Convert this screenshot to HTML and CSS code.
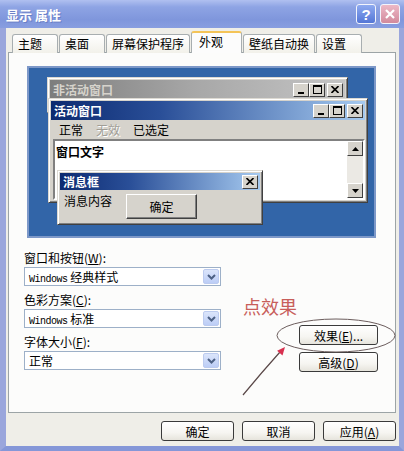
FILE: index.html
```html
<!DOCTYPE html>
<html lang="zh-CN">
<head>
    <meta charset="UTF-8">
    <meta name="viewport" content="width=device-width, initial-scale=1.0">
    <title>显示 属性</title>
    <link rel="stylesheet" href="styles.css">
</head>
<body>
    <div class="window">
        <div class="titlebar">
            <span class="title">显示 属性</span>
            <div class="caption-btns">
                <span class="cap-btn help">?</span>
                <span class="cap-btn close">
                    <svg width="10" height="10" viewBox="0 0 10 10"><path d="M1 1 L9 9 M9 1 L1 9" stroke="#fff" stroke-width="2.2"/></svg>
                </span>
            </div>
        </div>

        <div class="client">
            <div class="tabs">
                <div class="tab">主题</div>
                <div class="tab">桌面</div>
                <div class="tab">屏幕保护程序</div>
                <div class="tab selected">外观</div>
                <div class="tab">壁纸自动换</div>
                <div class="tab">设置</div>
            </div>

            <div class="panel">
                <!-- Preview of window appearance -->
                <div class="preview">
                    <div class="mini-win inactive">
                        <div class="mini-title">
                            <span>非活动窗口</span>
                            <div class="mini-btns">
                                <span class="mini-btn"><svg width="8" height="8"><rect x="1" y="6" width="6" height="2" fill="#000"/></svg></span>
                                <span class="mini-btn"><svg width="9" height="9"><rect x="0.5" y="0.5" width="8" height="8" fill="none" stroke="#000"/><rect x="0" y="0" width="9" height="2" fill="#000"/></svg></span>
                                <span class="mini-btn gap"><svg width="8" height="7"><path d="M0.5 0 L7.5 7 M7.5 0 L0.5 7" stroke="#000" stroke-width="1.6"/></svg></span>
                            </div>
                        </div>
                    </div>

                    <div class="mini-win active">
                        <div class="mini-title">
                            <span>活动窗口</span>
                            <div class="mini-btns">
                                <span class="mini-btn"><svg width="8" height="8"><rect x="1" y="6" width="6" height="2" fill="#000"/></svg></span>
                                <span class="mini-btn"><svg width="9" height="9"><rect x="0.5" y="0.5" width="8" height="8" fill="none" stroke="#000"/><rect x="0" y="0" width="9" height="2" fill="#000"/></svg></span>
                                <span class="mini-btn gap"><svg width="8" height="7"><path d="M0.5 0 L7.5 7 M7.5 0 L0.5 7" stroke="#000" stroke-width="1.6"/></svg></span>
                            </div>
                        </div>
                        <div class="mini-menu">
                            <span>正常</span>
                            <span class="disabled">无效</span>
                            <span>已选定</span>
                        </div>
                        <div class="mini-text">
                            <div class="mini-text-body">窗口文字</div>
                            <div class="scrollbar">
                                <span class="sb-btn"><svg width="7" height="4"><path d="M3.5 0 L7 4 L0 4 Z" fill="#000"/></svg></span>
                                <span class="sb-track"></span>
                                <span class="sb-btn"><svg width="7" height="4"><path d="M0 0 L7 0 L3.5 4 Z" fill="#000"/></svg></span>
                            </div>
                        </div>
                    </div>

                    <div class="mini-win msgbox">
                        <div class="mini-title">
                            <span>消息框</span>
                            <div class="mini-btns">
                                <span class="mini-btn"><svg width="8" height="7"><path d="M0.5 0 L7.5 7 M7.5 0 L0.5 7" stroke="#000" stroke-width="1.6"/></svg></span>
                            </div>
                        </div>
                        <div class="msg-body">
                            <span>消息内容</span>
                            <span class="classic-btn">确定</span>
                        </div>
                    </div>
                </div>

                <div class="options">
                    <div class="fields">
                        <div class="field">
                            <label>窗口和按钮(<u>W</u>):</label>
                            <div class="select">
                                <span><span class="latin">Windows</span> 经典样式</span>
                                <span class="drop"><svg width="9" height="6"><path d="M1 1 L4.5 4.5 L8 1" fill="none" stroke="#4d6185" stroke-width="2"/></svg></span>
                            </div>
                        </div>
                        <div class="field">
                            <label>色彩方案(<u>C</u>):</label>
                            <div class="select">
                                <span><span class="latin">Windows</span> 标准</span>
                                <span class="drop"><svg width="9" height="6"><path d="M1 1 L4.5 4.5 L8 1" fill="none" stroke="#4d6185" stroke-width="2"/></svg></span>
                            </div>
                        </div>
                        <div class="field">
                            <label>字体大小(<u>F</u>):</label>
                            <div class="select">
                                <span>正常</span>
                                <span class="drop"><svg width="9" height="6"><path d="M1 1 L4.5 4.5 L8 1" fill="none" stroke="#4d6185" stroke-width="2"/></svg></span>
                            </div>
                        </div>
                    </div>
                    <div class="side-btns">
                        <button class="btn wide">效果(<u>E</u>)...</button>
                        <button class="btn wide">高级(<u>D</u>)</button>
                    </div>
                </div>
            </div>

            <div class="footer">
                <button class="btn">确定</button>
                <button class="btn">取消</button>
                <button class="btn">应用(<u>A</u>)</button>
            </div>
        </div>

        <!-- Red hint added on the screenshot -->
        <div class="note">点效果</div>
        <svg class="markup" width="404" height="451" viewBox="0 0 404 451">
            <ellipse cx="336" cy="335.5" rx="59" ry="16.5" fill="none" stroke="#6b5c5c" stroke-width="1"/>
            <path d="M243 395 Q262 372 280 352" fill="none" stroke="#5a4848" stroke-width="1.2"/>
            <polygon points="285,347 282.5,355.4 277.1,350.8" fill="#d8304f"/>
        </svg>
    </div>
</body>
</html>
```

FILE: styles.css
```css
/* Core Styling */
*, *:before, *:after {
    margin: 0;
    padding: 0;
    box-sizing: border-box;
}

body {
    font-family: "Noto Sans CJK SC", "Liberation Sans", sans-serif;
    font-size: 12px;
    color: #000;
    background-color: #fff;
}

u {
    text-decoration: underline;
}

.window {
    position: relative;
    width: 404px;
    height: 451px;
    display: flex;
    flex-direction: column;
    overflow: hidden;
}

/* Title bar */
.titlebar {
    height: 28px;
    display: flex;
    align-items: center;
    justify-content: space-between;
    padding: 0 4px 0 6px;
    background: linear-gradient(to bottom, #b0c0f0 0%, #8ea4e4 25%, #7f96dc 70%, #889ee0 100%);
}

.title {
    color: #fff;
    font-size: 13px;
    font-weight: bold;
    text-shadow: 1px 1px 0 #6a7fc6;
}

.caption-btns {
    display: flex;
    gap: 4px;
}

.cap-btn {
    width: 20px;
    height: 20px;
    border: 1px solid #f2f4fc;
    border-radius: 3px;
    display: flex;
    align-items: center;
    justify-content: center;
    color: #fff;
    font-family: "Liberation Sans", sans-serif;
    font-weight: bold;
    font-size: 15px;
}

.cap-btn.help {
    background: linear-gradient(to bottom, #8eaaf0, #5476d6);
}

.cap-btn.close {
    background: linear-gradient(to bottom, #ecb8c6, #d28a9c);
}

/* Client area */
.client {
    flex: 1;
    display: flex;
    flex-direction: column;
    background-color: #efeee8;
    border-left: 6px solid #9aa6dc;
    border-right: 5px solid #9aa6dc;
    border-bottom: 5px solid #8597d8;
    padding: 3px 3px 5px 2px;
}

.tabs {
    display: flex;
    align-items: flex-end;
    gap: 1px;
    height: 22px;
    padding-left: 4px;
    margin-bottom: -1px;
    position: relative;
    z-index: 1;
}

.tab {
    height: 19px;
    min-width: 46px;
    padding: 0 5px;
    line-height: 17px;
    border: 1px solid #a8aeb0;
    border-bottom: none;
    border-radius: 3px 3px 0 0;
    background: linear-gradient(to bottom, #fff, #f2f1ea);
}

.tab.selected {
    height: 22px;
    min-width: 51px;
    padding: 0 7px;
    line-height: 18px;
    border-top: 2px solid #f4c458;
    background: #fcfcfc;
}

.panel {
    height: 361px;
    border: 1px solid #9ca4a6;
    background-color: #fcfcfb;
    padding: 13px 15px 0 15px;
}

/* Preview screen */
.preview {
    position: relative;
    width: 349px;
    height: 172px;
    margin-left: 3px;
    background-color: #3265a8;
    border: 2px solid #7d98c8;
}

.mini-win {
    position: absolute;
    background-color: #d6d3cc;
    border: 1px solid;
    border-color: #dcd9d2 #404040 #404040 #dcd9d2;
    box-shadow: inset 1px 1px #fff, inset -1px -1px #808080;
    padding: 2px;
    display: flex;
    flex-direction: column;
}

.mini-win.inactive {
    left: 18px;
    top: 9px;
    width: 301px;
    height: 36px;
}

.mini-win.active {
    left: 19px;
    top: 30px;
    width: 320px;
    height: 105px;
}

.mini-win.msgbox {
    left: 28px;
    top: 102px;
    width: 206px;
    height: 55px;
}

.mini-title {
    height: 19px;
    display: flex;
    align-items: center;
    justify-content: space-between;
    padding: 0 2px 0 3px;
    color: #fff;
    font-weight: bold;
    background: linear-gradient(to right, #0c2a70 0%, #2a4f98 35%, #a6caf0 100%);
}

.inactive .mini-title {
    color: #d6d3cc;
    background: linear-gradient(to right, #7d7d7d 0%, #a8a8a8 50%, #c4c4c4 100%);
}

.msgbox .mini-title {
    height: 17px;
}

.mini-btns {
    display: flex;
}

.mini-btn {
    width: 16px;
    height: 14px;
    display: flex;
    align-items: center;
    justify-content: center;
    background-color: #d6d3cc;
    border: 1px solid;
    border-color: #fff #404040 #404040 #fff;
}

.mini-btn.gap {
    margin-left: 2px;
}

.mini-menu {
    height: 18px;
    display: flex;
    align-items: center;
    gap: 13px;
    padding-left: 8px;
}

.mini-menu .disabled {
    color: #a09d96;
    text-shadow: 1px 1px 0 #fff;
}

.mini-text {
    flex: 1;
    display: flex;
    margin: 1px 0 0 2px;
    background-color: #fff;
    border: 2px solid;
    border-color: #808080 #fff #fff #808080;
}

.mini-text-body {
    flex: 1;
    padding: 2px 1px;
    font-weight: bold;
}

.scrollbar {
    width: 16px;
    display: flex;
    flex-direction: column;
}

.sb-btn {
    height: 15px;
    display: flex;
    align-items: center;
    justify-content: center;
    background-color: #d6d3cc;
    border: 1px solid;
    border-color: #fff #404040 #404040 #fff;
}

.sb-track {
    flex: 1;
    background-color: #ebe9e4;
}

.msg-body {
    flex: 1;
    display: flex;
    align-items: flex-start;
    gap: 14px;
    padding: 2px 0 0 4px;
}

.classic-btn {
    width: 71px;
    height: 25px;
    margin-top: 2px;
    display: flex;
    align-items: center;
    justify-content: center;
    background-color: #d6d3cc;
    border: 1px solid;
    border-color: #fff #404040 #404040 #fff;
    box-shadow: inset -1px -1px #808080;
}

/* Options below preview */
.options {
    display: flex;
    margin-top: 12px;
}

.fields {
    width: 197px;
    display: flex;
    flex-direction: column;
    gap: 6px;
}

.field {
    display: flex;
    flex-direction: column;
    gap: 2px;
}

.field label {
    line-height: 15px;
}

.select {
    height: 19px;
    display: flex;
    align-items: center;
    justify-content: space-between;
    padding: 0 1px 0 4px;
    background-color: #fff;
    border: 1px solid #9db0c8;
}

.latin {
    font-family: "Liberation Mono", monospace;
    font-size: 10px;
    letter-spacing: -0.5px;
}

.drop {
    width: 16px;
    height: 15px;
    display: flex;
    align-items: center;
    justify-content: center;
    border: 1px solid #bccbef;
    border-radius: 2px;
    background: linear-gradient(to bottom, #dbe5fb, #bccdf6);
}

.side-btns {
    display: flex;
    flex-direction: column;
    gap: 7px;
    margin: 75px 0 0 78px;
}

.btn {
    width: 73px;
    height: 20px;
    font-family: inherit;
    font-size: 12px;
    color: #000;
    border: 1px solid #3a3a3a;
    border-radius: 3px;
    background: linear-gradient(to bottom, #fff 0%, #f6f5f1 60%, #e6e4dc 100%);
}

.btn.wide {
    width: 79px;
}

.footer {
    display: flex;
    justify-content: flex-end;
    gap: 8px;
    margin-top: 8px;
}

/* Annotation layer */
.note {
    position: absolute;
    left: 243px;
    top: 296px;
    font-size: 18px;
    line-height: 20px;
    color: #c85e5a;
}

.markup {
    position: absolute;
    left: 0;
    top: 0;
    pointer-events: none;
}
```
